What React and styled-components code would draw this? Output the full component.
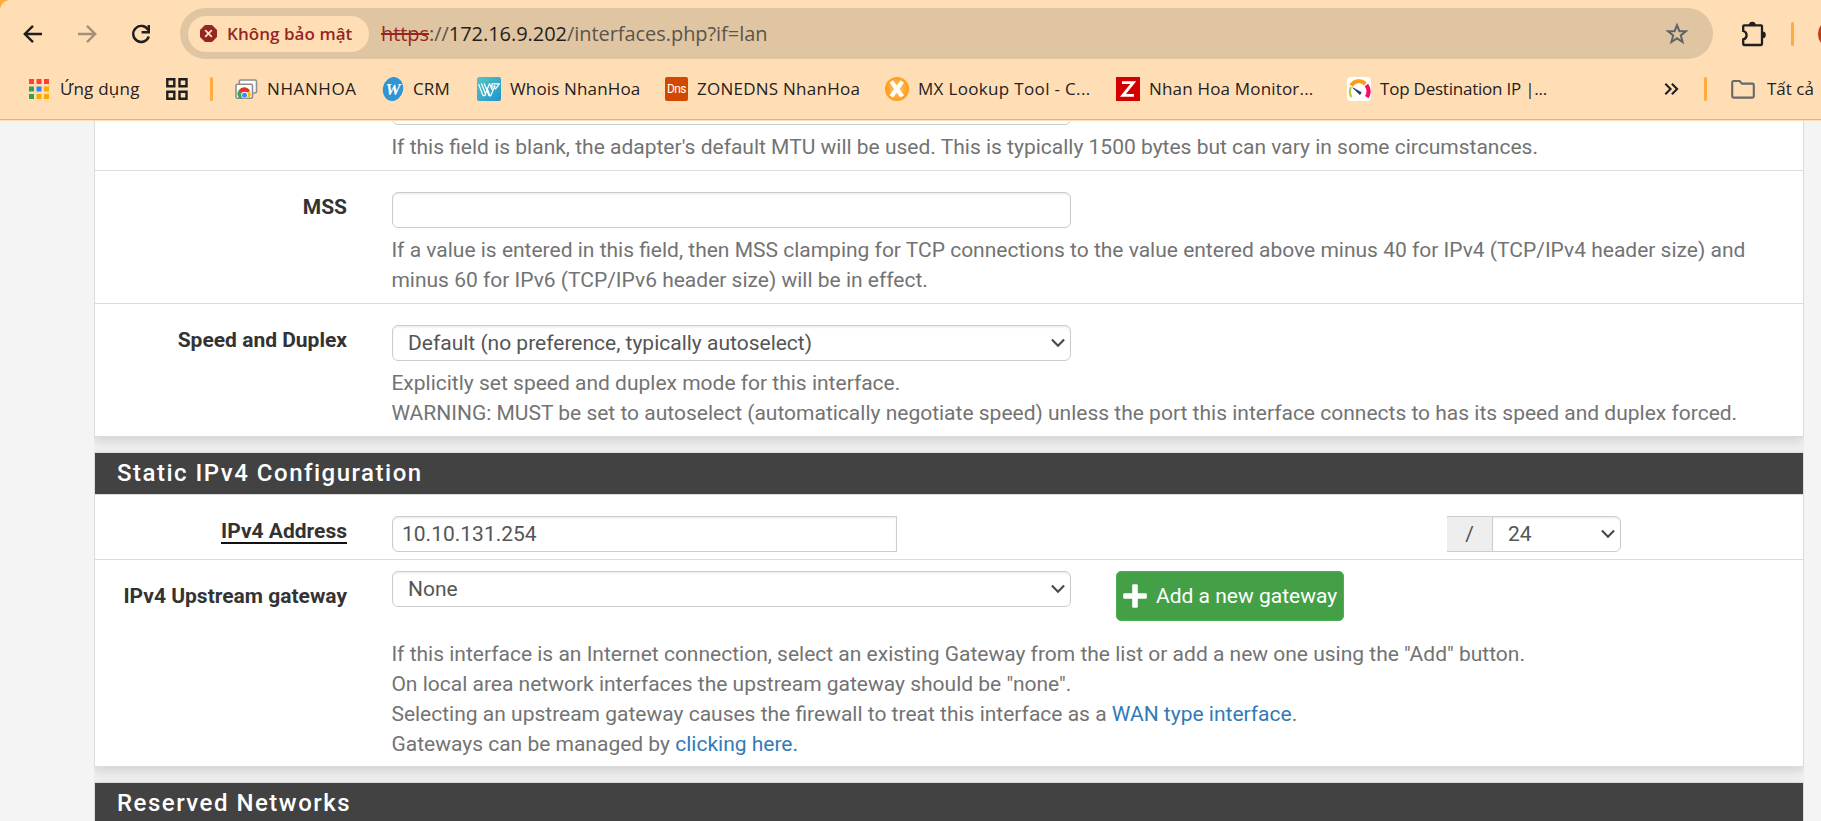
import React from "react";
import styled, { createGlobalStyle } from "styled-components";

const Global = createGlobalStyle`
  *, *::before, *::after { box-sizing: border-box; }
  html, body { margin: 0; padding: 0; overflow: hidden; }
  body { background: #f4f4f4; }
`;

const Window = styled.div`
  height: 821px;
  display: flex;
  flex-direction: column;
  overflow: hidden;
  background: #f4f4f4;
  font-family: Roboto, "Liberation Sans", sans-serif;
`;

/* ---------- browser chrome ---------- */

const Chrome = styled.header`
  flex: none;
  height: 121px;
  background: #ffab40;
  font-family: "Open Sans", "Noto Sans", sans-serif;
`;

const ChromeSurface = styled.div`
  height: 121px;
  background: linear-gradient(#d3b48f, #d3b48f) 0 119px / 100% 1px no-repeat #ffdeb5;
  border-top-left-radius: 10px;
  overflow: hidden;
`;

const Toolbar = styled.div`
  display: flex;
  align-items: center;
  height: 51px;
  margin-top: 8px;
  padding-left: 20px;
`;

const NavButton = styled.span`
  display: flex;
  flex: none;
  width: 54px;
  height: 26px;
  opacity: ${(p) => (p.$dim ? 0.4 : 1)};
`;

const Omnibox = styled.div`
  display: flex;
  align-items: center;
  flex: none;
  width: 1533px;
  height: 51px;
  margin-left: -2px;
  padding: 0 24px 0 8px;
  border-radius: 26px;
  background: #dfc5a2;
`;

const SecurityChip = styled.div`
  display: flex;
  align-items: center;
  gap: 10px;
  width: 181px;
  height: 36px;
  padding-left: 12px;
  border-radius: 18px;
  background: #ffdeb5;
  color: #942723;
  font-size: 17px;
  font-weight: 600;
  letter-spacing: 0.05px;
  white-space: nowrap;
`;

const Url = styled.div`
  flex: 1;
  margin-left: 12px;
  padding-bottom: 1px;
  font-size: 20px;
  letter-spacing: -0.05px;
  color: #5c544b;
  white-space: nowrap;

  s { color: #942723; text-decoration-thickness: 2px; }
  b { color: #1f1f22; font-weight: 400; }
`;

const ToolbarEnd = styled.div`
  display: flex;
  align-items: center;
  flex: none;
  margin-left: 28px;
  height: 51px;
`;

const Divider = styled.i`
  flex: none;
  width: 3px;
  height: 24px;
  border-radius: 2px;
  background: #ffab40;
  margin-left: ${(p) => p.$before || 0}px;
  margin-right: ${(p) => p.$after || 0}px;
`;

const Avatar = styled.i`
  flex: none;
  width: 30px;
  height: 30px;
  border-radius: 50%;
  background: #c53a12;
`;

const BookmarkBar = styled.nav`
  display: flex;
  align-items: center;
  height: 24px;
  margin-top: 18px;
  padding-left: 28px;
`;

const BookmarkItem = styled.a`
  display: flex;
  align-items: center;
  flex: none;
  width: ${(p) => p.$width}px;
  color: #25211d;
  font-size: 17px;
  line-height: 24px;
  letter-spacing: ${(p) => p.$track || 0}px;
  white-space: nowrap;

  > :first-child { flex: none; margin-right: ${(p) => p.$gap ?? 9}px; }
`;

/* ---------- settings page ---------- */

const Viewport = styled.main`
  flex: 1;
  min-height: 0;
  overflow: hidden;
`;

const Container = styled.div`
  width: 1710px;
  margin-left: 94px;
  background: #f0f0f0;
  overflow: hidden;
`;

const Panel = styled.section`
  margin-bottom: 15px;
  border: 1px solid #dcdcdc;
  border-top-width: ${(p) => (p.$continued ? 0 : 1)}px;
  background: #fff;
  box-shadow: 0 4px 10px rgba(0, 0, 0, 0.13);
`;

const PanelTitle = styled.h2`
  height: 42px;
  margin: 0;
  padding: 0 22px;
  border-bottom: 1px solid #dcdcdc;
  background: #424242;
  background-clip: padding-box;
  color: #fff;
  font-size: 24px;
  font-weight: 500;
  line-height: 40px;
  letter-spacing: 1.5px;
`;

const Row = styled.div`
  display: flex;
  padding: ${(p) => p.$pad || "21px 0 8px"};
  border-bottom: 1px solid #dcdcdc;
  &:last-child { border-bottom: 0; }
`;

const Label = styled.label`
  flex: none;
  width: 252px;
  margin-right: 45px;
  padding-top: ${(p) => p.$drop || 0}px;
  text-align: right;
  color: #333;
  font-size: 21px;
  font-weight: 700;
  line-height: 30px;
  white-space: nowrap;

  span {
    display: inline-block;
    line-height: 26px;
    height: 26px;
    border-bottom: 2px solid #111;
  }
`;

const Field = styled.div`
  flex: none;
  width: 1380px;
`;

const Controls = styled.div`
  display: flex;
  align-items: flex-start;
`;

const Control = styled.div`
  display: flex;
  align-items: center;
  justify-content: space-between;
  width: ${(p) => p.$width || 679}px;
  height: 36px;
  padding: ${(p) => (p.$select ? "0 5px 0 15px" : "0 9px")};
  border: 1px solid #ccc;
  border-radius: ${(p) => p.$radius || "6px"};
  background: #fff;
  box-shadow: inset 0 1.5px 1.5px rgba(0, 0, 0, 0.075);
  color: #555;
  font-size: 21px;
  line-height: 34px;
  white-space: nowrap;
`;

const ClippedControl = styled(Control)`
  margin-top: -32px;
`;

const Addon = styled.div`
  width: 45px;
  height: 36px;
  margin-left: 550px;
  border: solid #ccc;
  border-width: 1px 0;
  background: #eee;
  color: #555;
  font-size: 21px;
  line-height: 34px;
  text-align: center;
`;

const Help = styled.p`
  margin: ${(p) => p.$gap ?? 7}px 0 0 -0.6px;
  color: #737373;
  font-size: 21px;
  line-height: 30px;
  white-space: nowrap;
`;

const Link = styled.a`
  color: #337ab7;
`;

const AddButton = styled.button`
  display: flex;
  align-items: center;
  gap: 9px;
  width: 228px;
  height: 50px;
  margin: 0 0 0 45px;
  padding: 0 0 0 6px;
  border: 1px solid #4caf50;
  border-radius: 5px;
  background: #43a047;
  color: #fff;
  font: 400 21px/30px Roboto, "Liberation Sans", sans-serif;
  white-space: nowrap;
`;

/* ---------- icons ---------- */

const ArrowIcon = ({ flip }) => (
  <svg width="26" height="26" viewBox="0 0 26 26" fill="none" stroke="#1f1f1f" strokeWidth="2.4">
    <path d={flip ? "M4 13h17M13 4.8L21.2 13 13 21.2" : "M22 13H5M13 4.8L4.8 13 13 21.2"} />
  </svg>
);

const ReloadIcon = () => (
  <svg width="26" height="26" viewBox="0 0 26 26" fill="none" stroke="#1f1f1f" strokeWidth="2.4">
    <path d="M20.3 9.2A8 8 0 1 0 20.8 15.5" />
    <path d="M20.8 4v7.2h-7.2" />
  </svg>
);

const DangerIcon = () => (
  <svg width="17" height="17" viewBox="0 0 17 17">
    <path d="M5 0h7l5 5v7l-5 5H5l-5-5V5z" fill="#942723" />
    <path d="M5.2 5.2l6.6 6.6M11.8 5.2l-6.6 6.6" stroke="#ffdeb5" strokeWidth="1.9" />
  </svg>
);

const StarIcon = () => (
  <svg width="24" height="24" viewBox="0 0 24 24" fill="none" stroke="#616467" strokeWidth="2">
    <path d="M12 3.2l2.4 6h6.5l-5.1 4.2 1.8 6.6L12 16.3 6.4 20l1.8-6.6L3.1 9.2h6.5z" />
  </svg>
);

const PuzzleIcon = () => (
  <svg width="26" height="26" viewBox="0 0 26 26">
    <path
      d="M3.2 4.3H20a1 1 0 0 1 1 1V23a1 1 0 0 1-1 1H3.2a1 1 0 0 1-1-1v-4.6a4.3 4.3 0 0 0 0-8.4V5.3a1 1 0 0 1 1-1z"
      fill="none" stroke="#1f1f1f" strokeWidth="2.3"
    />
    <path d="M8 4a3.3 3.3 0 0 1 6.6 0zM21.5 10.6a3.3 3.3 0 0 1 0 6.6z" fill="#1f1f1f" />
  </svg>
);

const APP_COLOURS = ["#ff4131", "#ff4131", "#ff4131", "#34a14f", "#2684fc", "#fba900", "#34a14f", "#fba900", "#fba900"];

const AppsIcon = () => (
  <svg width="22" height="22" viewBox="0 0 22 22">
    {APP_COLOURS.map((c, i) => (
      <rect key={i} x={1 + (i % 3) * 7.5} y={1 + Math.floor(i / 3) * 7.5} width="5" height="5" fill={c} />
    ))}
  </svg>
);

const GridIcon = () => (
  <svg width="22" height="22" viewBox="0 0 22 22" fill="none" stroke="#1f1f1f" strokeWidth="2.4">
    <path d="M1.3 1.3h7v7h-7zM13.5 1.3h7v7h-7zM1.3 13.7h7v7h-7zM13.5 13.7h7v7h-7z" />
  </svg>
);

const NhanHoaIcon = () => (
  <svg width="23" height="24" viewBox="0 0 23 24">
    <rect x="4.3" y="3" width="17.2" height="13" rx="1.5" fill="#fff" stroke="#8e8e8e" strokeWidth="1.6" />
    <rect x="1" y="7.3" width="16.5" height="14" rx="1.5" fill="#fff" stroke="#8e8e8e" strokeWidth="1.6" />
    <path d="M3.4 20a6 6 0 0 1 1-7.4L7.3 18v3.2H4z" fill="#34a853" />
    <path d="M4 13a6.3 6.3 0 0 1 11 1.2l-5.5 2.2-2.6.8z" fill="#e3342a" />
    <path d="M15.2 14.6a6 6 0 0 1-.6 6H11l1-5z" fill="#fbbc05" />
    <circle cx="9.5" cy="18" r="3.3" fill="#fff" />
    <circle cx="9.5" cy="18.2" r="2.5" fill="#4285f4" />
  </svg>
);

const CrmIcon = () => (
  <svg width="22" height="24" viewBox="0 0 22 24">
    <ellipse cx="11" cy="12" rx="10.1" ry="12.1" transform="rotate(12 11 12)" fill="#2f96d3" />
    <text x="11" y="17.5" textAnchor="middle" fontFamily="Liberation Serif, serif" fontWeight="700" fontStyle="italic" fontSize="17" fill="#fff">W</text>
  </svg>
);

const WhoisIcon = () => (
  <svg width="24" height="24" viewBox="0 0 24 24">
    <defs>
      <linearGradient id="whois" x1="0" y1="0" x2="1" y2="1">
        <stop offset="0" stopColor="#57c7c2" />
        <stop offset="1" stopColor="#1c93cf" />
      </linearGradient>
    </defs>
    <rect width="24" height="24" rx="2" fill="url(#whois)" />
    <path
      d="M1.8 7.5l4 10.6a1.2 1.2 0 0 0 2.2 0L12.4 6.8M4.6 6.8l4.2 11M7.3 6.8l4.4 11.3a1.3 1.3 0 0 0 2.3 0L18 8.8M10 11l2.6 6.6M12.8 7.2l2.2 5.4M15 12.2V6.8h7.3l-3.7 5-1.8-2.6"
      fill="none" stroke="#fff" strokeWidth="1.2" strokeLinecap="round" strokeLinejoin="round"
    />
  </svg>
);

const DnsBadge = styled.span`
  width: 23px;
  height: 24px;
  border-radius: 2px;
  background: #d14900;
  color: #fff;
  font: 400 12px/24px Roboto, sans-serif;
  letter-spacing: -0.6px;
  text-align: center;
`;

const MxIcon = () => (
  <svg width="24" height="24" viewBox="0 0 24 24">
    <defs>
      <radialGradient id="mx">
        <stop offset="0" stopColor="#ffca72" />
        <stop offset="1" stopColor="#ff9b17" />
      </radialGradient>
    </defs>
    <circle cx="12" cy="12" r="12" fill="url(#mx)" />
    <path d="M6.3 4.5L17.3 19.5M17.3 4.5L6.3 19.5" stroke="#fff" strokeWidth="4.2" />
  </svg>
);

const ZIcon = () => (
  <svg width="24" height="24" viewBox="0 0 24 24">
    <rect width="24" height="24" fill="#d40000" />
    <path d="M6 5.6h11.2L7 18.4h11" fill="none" stroke="#fff" strokeWidth="2.9" />
  </svg>
);

const GaugeIcon = () => (
  <svg width="24" height="24" viewBox="0 0 24 24" fill="none">
    <rect width="24" height="24" rx="4" fill="#fff" />
    <path d="M4.6 20.2A10 10 0 0 1 4 10" stroke="#b5d334" strokeWidth="2.2" />
    <path d="M4.2 8.6A9 9 0 0 1 18.3 7" stroke="#f99d1c" strokeWidth="4" />
    <path d="M19.4 8a11 11 0 0 1 .4 12.2" stroke="#f50f64" strokeWidth="4.2" />
    <path d="M5.8 10.8l8.4 4.6-1.2 2.2z" fill="#1b365d" stroke="#1b365d" strokeWidth=".7" />
  </svg>
);

const OverflowIcon = () => (
  <svg width="16" height="14" viewBox="0 0 16 14" fill="none" stroke="#1f1f1f" strokeWidth="2.2">
    <path d="M1.4 1.4L7 7l-5.6 5.6M8.4 1.4L14 7l-5.6 5.6" />
  </svg>
);

const FolderIcon = () => (
  <svg width="24" height="20" viewBox="0 0 24 20" fill="none" stroke="#66686b" strokeWidth="2.1">
    <path d="M2.6 2h6l2.4 2.6h10.4a1.4 1.4 0 0 1 1.4 1.4v11.2a1.4 1.4 0 0 1-1.4 1.4H2.6a1.4 1.4 0 0 1-1.4-1.4V3.4A1.4 1.4 0 0 1 2.6 2z" />
  </svg>
);

const Caret = () => (
  <svg width="14" height="10" viewBox="0 0 14 10" fill="none" stroke="#484848" strokeWidth="2.1">
    <path d="M.9 1.4L7 7.7l6.1-6.3" />
  </svg>
);

const PlusIcon = () => (
  <svg width="24" height="24" viewBox="0 0 24 24">
    <path d="M9.2 1.2a1 1 0 0 1 1-1h3.6a1 1 0 0 1 1 1v8h8a1 1 0 0 1 1 1v3.6a1 1 0 0 1-1 1h-8v8a1 1 0 0 1-1 1h-3.6a1 1 0 0 1-1-1v-8h-8a1 1 0 0 1-1-1v-3.6a1 1 0 0 1 1-1h8z" fill="#fff" />
  </svg>
);

const BOOKMARKS = [
  { icon: <NhanHoaIcon />, text: "NHANHOA", width: 147, track: 0.6 },
  { icon: <CrmIcon />, text: "CRM", width: 95, track: 0.1 },
  { icon: <WhoisIcon />, text: "Whois NhanHoa", width: 188, track: 0.15 },
  { icon: <DnsBadge>Dns</DnsBadge>, text: "ZONEDNS NhanHoa", width: 220, track: 0.25 },
  { icon: <MxIcon />, text: "MX Lookup Tool - C...", width: 231, track: 0.33 },
  { icon: <ZIcon />, text: "Nhan Hoa Monitor...", width: 231, track: 0.18 },
  { icon: <GaugeIcon />, text: "Top Destination IP |...", width: 317, track: -0.22 },
];

export default function App() {
  return (
    <Window>
      <Global />
      <Chrome>
        <ChromeSurface>
          <Toolbar>
            <NavButton><ArrowIcon /></NavButton>
            <NavButton $dim><ArrowIcon flip /></NavButton>
            <NavButton><ReloadIcon /></NavButton>
            <Omnibox>
              <SecurityChip><DangerIcon />Không bảo mật</SecurityChip>
              <Url><s>https</s>://<b>172.16.9.202</b>/interfaces.php?if=lan</Url>
              <StarIcon />
            </Omnibox>
            <ToolbarEnd>
              <PuzzleIcon />
              <Divider $before={24} $after={24} />
              <Avatar />
            </ToolbarEnd>
          </Toolbar>
          <BookmarkBar>
            <BookmarkItem $width={138} $gap={10} $track={0.25}><AppsIcon />Ứng dụng</BookmarkItem>
            <BookmarkItem $width={44}><GridIcon /></BookmarkItem>
            <Divider $after={22} />
            {BOOKMARKS.map((b) => (
              <BookmarkItem key={b.text} $width={b.width} $track={b.track}>{b.icon}{b.text}</BookmarkItem>
            ))}
            <OverflowIcon />
            <Divider $before={25} $after={24} />
            <BookmarkItem $width={90} $gap={12}><FolderIcon />Tất cả</BookmarkItem>
          </BookmarkBar>
        </ChromeSurface>
      </Chrome>

      <Viewport>
        <Container>
          <Panel $continued>
            <Row $pad="0 0 8px">
              <Label />
              <Field>
                <ClippedControl />
                <Help>If this field is blank, the adapter's default MTU will be used. This is typically 1500 bytes but can vary in some circumstances.</Help>
              </Field>
            </Row>
            <Row>
              <Label>MSS</Label>
              <Field>
                <Control />
                <Help>
                  If a value is entered in this field, then MSS clamping for TCP connections to the value entered above minus 40 for IPv4 (TCP/IPv4 header size) and<br />
                  minus 60 for IPv6 (TCP/IPv6 header size) will be in effect.
                </Help>
              </Field>
            </Row>
            <Row>
              <Label>Speed and Duplex</Label>
              <Field>
                <Control $select>Default (no preference, typically autoselect)<Caret /></Control>
                <Help>
                  Explicitly set speed and duplex mode for this interface.<br />
                  WARNING: MUST be set to autoselect (automatically negotiate speed) unless the port this interface connects to has its speed and duplex forced.
                </Help>
              </Field>
            </Row>
          </Panel>

          <Panel>
            <PanelTitle>Static IPv4 Configuration</PanelTitle>
            <Row $pad="21px 0 7px">
              <Label><span>IPv4 Address</span></Label>
              <Controls>
                <Control $width={505} $radius="6px 0 0 6px">10.10.131.254</Control>
                <Addon>/</Addon>
                <Control $select $width={129} $radius="0 6px 6px 0">24<Caret /></Control>
              </Controls>
            </Row>
            <Row $pad="11px 0 7px">
              <Label $drop={10}>IPv4 Upstream gateway</Label>
              <Field>
                <Controls>
                  <Control $select>None<Caret /></Control>
                  <AddButton><PlusIcon />Add a new gateway</AddButton>
                </Controls>
                <Help $gap={18}>
                  If this interface is an Internet connection, select an existing Gateway from the list or add a new one using the "Add" button.<br />
                  On local area network interfaces the upstream gateway should be "none".<br />
                  Selecting an upstream gateway causes the firewall to treat this interface as a <Link>WAN type interface</Link>.<br />
                  Gateways can be managed by <Link>clicking here.</Link>
                </Help>
              </Field>
            </Row>
          </Panel>

          <Panel>
            <PanelTitle>Reserved Networks</PanelTitle>
          </Panel>
        </Container>
      </Viewport>
    </Window>
  );
}
